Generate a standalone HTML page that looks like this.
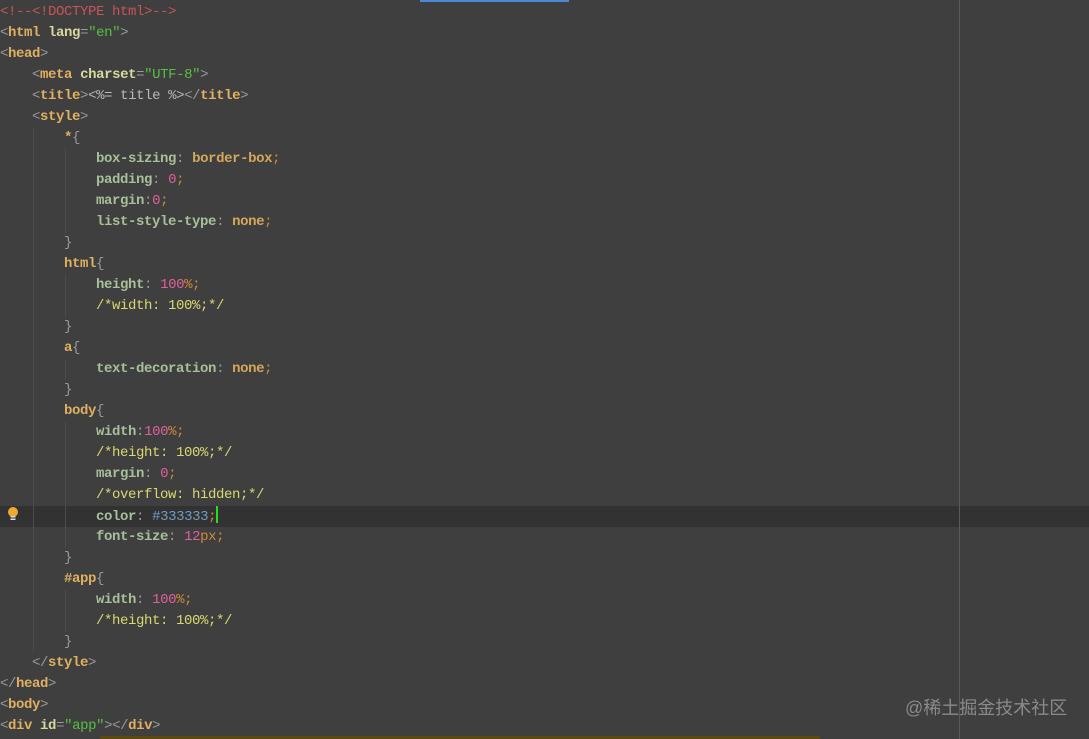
<!DOCTYPE html>
<html><head><meta charset="utf-8"><style>
html,body{margin:0;padding:0;}
body{width:1089px;height:739px;background:#3f3f3f;position:relative;overflow:hidden;font-family:"Liberation Mono",monospace;font-size:14px;}
.code{position:absolute;left:0;top:2px;letter-spacing:-0.4px;}
.l{height:21px;line-height:21px;white-space:pre;color:#a9b7c6;}
.cm{color:#c7545a}
.b{color:#9a9a9a}
.t{color:#e0b060;font-weight:bold}
.a{color:#d8d8a0;font-weight:bold}
.s{color:#56c041}
.p{color:#a9bf9a;font-weight:bold}
.v{color:#d4a85a;font-weight:bold}
.n{color:#e0609a}
.o{color:#d08a3a}
.c2{color:#d8d870}
.h{color:#6f9bc4}
.w{color:#b8b8b8}
.guide{position:absolute;width:1px;background:#4c4c4c;}
</style></head><body>
<div style="position:absolute;left:420px;top:0;width:149px;height:2px;background:#4a88d8"></div>
<div style="position:absolute;left:0;top:506px;width:1089px;height:21px;background:#323232"></div>
<div style="position:absolute;left:959px;top:0;width:1px;height:739px;background:#5a5a5a"></div>
<div class="guide" style="left:33px;top:128px;height:523px"></div>
<div class="guide" style="left:65px;top:149px;height:84px"></div>
<div class="guide" style="left:65px;top:275px;height:42px"></div>
<div class="guide" style="left:65px;top:359px;height:21px"></div>
<div class="guide" style="left:65px;top:422px;height:126px"></div>
<div class="guide" style="left:65px;top:590px;height:42px"></div>
<div style="position:absolute;left:100px;top:736px;width:720px;height:3px;background:#5a4a10"></div>
<svg style="position:absolute;left:7px;top:506px" width="12" height="16" viewBox="0 0 12 16"><circle cx="6" cy="6" r="5" fill="#f0a830"/><rect x="3.5" y="10" width="5" height="1.5" fill="#ddd"/><rect x="3.5" y="12.5" width="5" height="1.5" fill="#ddd"/></svg>
<div class="code">
<div class="l cm">&lt;!--&lt;!DOCTYPE html&gt;--&gt;</div>
<div class="l"><span class="b">&lt;</span><span class="t">html</span> <span class="a">lang</span><span class="b">=</span><span class="s">"en"</span><span class="b">&gt;</span></div>
<div class="l"><span class="b">&lt;</span><span class="t">head</span><span class="b">&gt;</span></div>
<div class="l">    <span class="b">&lt;</span><span class="t">meta</span> <span class="a">charset</span><span class="b">=</span><span class="s">"UTF-8"</span><span class="b">&gt;</span></div>
<div class="l">    <span class="b">&lt;</span><span class="t">title</span><span class="b">&gt;</span><span class="w">&lt;%= title %&gt;</span><span class="b">&lt;/</span><span class="t">title</span><span class="b">&gt;</span></div>
<div class="l">    <span class="b">&lt;</span><span class="t">style</span><span class="b">&gt;</span></div>
<div class="l">        <span class="t">*</span><span class="b">{</span></div>
<div class="l">            <span class="p">box-sizing</span><span class="b">: </span><span class="v">border-box</span><span class="o">;</span></div>
<div class="l">            <span class="p">padding</span><span class="b">: </span><span class="n">0</span><span class="o">;</span></div>
<div class="l">            <span class="p">margin</span><span class="b">:</span><span class="n">0</span><span class="o">;</span></div>
<div class="l">            <span class="p">list-style-type</span><span class="b">: </span><span class="v">none</span><span class="o">;</span></div>
<div class="l">        <span class="b">}</span></div>
<div class="l">        <span class="t">html</span><span class="b">{</span></div>
<div class="l">            <span class="p">height</span><span class="b">: </span><span class="n">100</span><span class="o">%;</span></div>
<div class="l">            <span class="c2">/*width: 100%;*/</span></div>
<div class="l">        <span class="b">}</span></div>
<div class="l">        <span class="t">a</span><span class="b">{</span></div>
<div class="l">            <span class="p">text-decoration</span><span class="b">: </span><span class="v">none</span><span class="o">;</span></div>
<div class="l">        <span class="b">}</span></div>
<div class="l">        <span class="t">body</span><span class="b">{</span></div>
<div class="l">            <span class="p">width</span><span class="b">:</span><span class="n">100</span><span class="o">%;</span></div>
<div class="l">            <span class="c2">/*height: 100%;*/</span></div>
<div class="l">            <span class="p">margin</span><span class="b">: </span><span class="n">0</span><span class="o">;</span></div>
<div class="l">            <span class="c2">/*overflow: hidden;*/</span></div>
<div class="l">            <span class="p">color</span><span class="b">: </span><span class="h">#333333</span><span class="o">;</span><span style="display:inline-block;width:2px;height:17px;background:#20e020;vertical-align:-3px"></span></div>
<div class="l">            <span class="p">font-size</span><span class="b">: </span><span class="n">12</span><span class="o">px;</span></div>
<div class="l">        <span class="b">}</span></div>
<div class="l">        <span class="t">#app</span><span class="b">{</span></div>
<div class="l">            <span class="p">width</span><span class="b">: </span><span class="n">100</span><span class="o">%;</span></div>
<div class="l">            <span class="c2">/*height: 100%;*/</span></div>
<div class="l">        <span class="b">}</span></div>
<div class="l">    <span class="b">&lt;/</span><span class="t">style</span><span class="b">&gt;</span></div>
<div class="l"><span class="b">&lt;/</span><span class="t">head</span><span class="b">&gt;</span></div>
<div class="l"><span class="b">&lt;</span><span class="t">body</span><span class="b">&gt;</span></div>
<div class="l"><span class="b">&lt;</span><span class="t">div</span> <span class="a">id</span><span class="b">=</span><span class="s">"app"</span><span class="b">&gt;&lt;/</span><span class="t">div</span><span class="b">&gt;</span></div>
</div>
<div style="position:absolute;left:905px;top:694px;font-family:'Liberation Sans','Noto Sans CJK SC',sans-serif;font-size:18px;color:#8a8a8a;white-space:nowrap">@稀土掘金技术社区</div>
</body></html>
